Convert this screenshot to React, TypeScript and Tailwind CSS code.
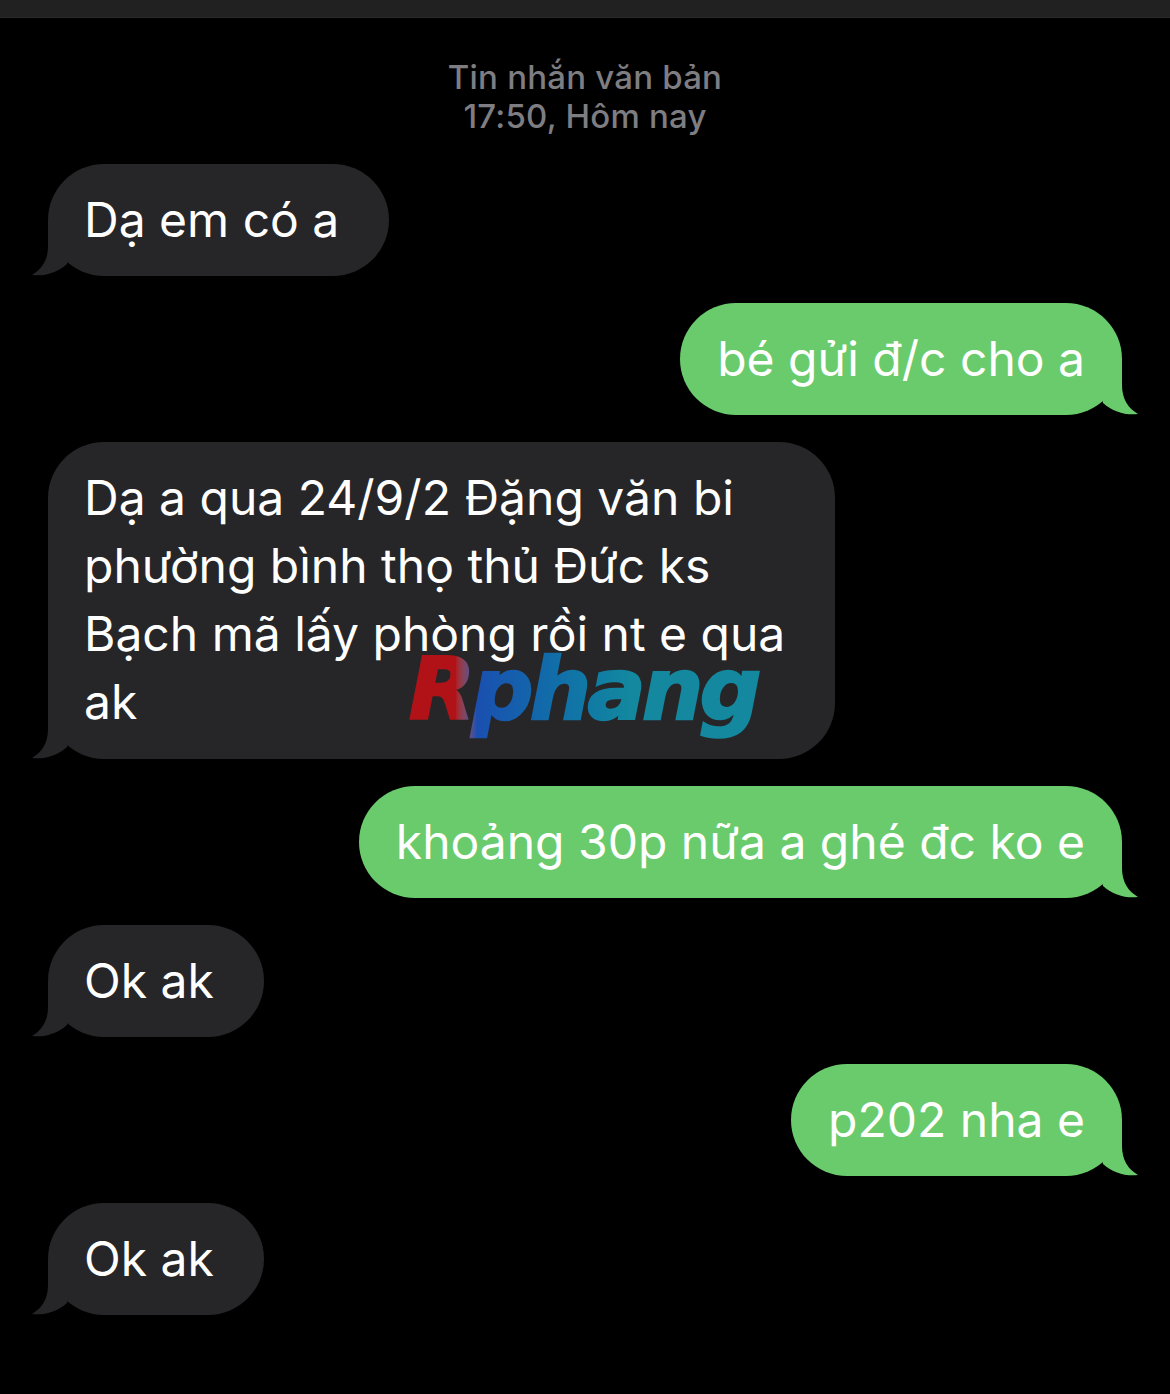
import React from "react";

const font = { fontFamily: "Inter, 'Noto Sans', sans-serif" };

const Tail = ({ side, color }: { side: "left" | "right"; color: string }) => (
  <svg
    width="44"
    height="56"
    viewBox="0 0 44 56"
    className={side === "left" ? "absolute bottom-0 left-[-16px]" : "absolute bottom-0 right-[-16px] -scale-x-100"}
  >
    <path d="M16 0V26C16 40 10 49 0 55C12 56.500 25 53 35 44L44 0Z" fill={color} />
  </svg>
);

const Bubble = ({ mine, children }: { mine?: boolean; children: React.ReactNode }) => (
  <div
    className={
      mine
        ? "relative self-end rounded-[56px] bg-[#69cb6c] py-[22px] pr-[37px] pl-[37px] text-[48px] leading-[68px] text-white whitespace-nowrap"
        : "relative self-start rounded-[56px] bg-[#262628] py-[22px] pr-[50px] pl-[36px] text-[48px] leading-[68px] text-white whitespace-nowrap"
    }
  >
    <Tail side={mine ? "right" : "left"} color={mine ? "#69cb6c" : "#262628"} />
    <div className="relative">{children}</div>
  </div>
);

export default function App() {
  return (
    <div className="h-[1394px] w-[1170px] overflow-hidden bg-black" style={font}>
      <div className="h-[18px] border-b border-[#2a2a2a] bg-[#212121]" />
      <div className="pt-[40px] text-center text-[33px] leading-[39px] font-medium tracking-[0.2px] text-[#7d7d82]">
        <div>Tin nhắn văn bản</div>
        <div>17:50, Hôm nay</div>
      </div>
      <div className="flex flex-col gap-[27px] pt-[28px] pl-[48px] pr-[48px]">
        <Bubble>Dạ em có a</Bubble>
        <Bubble mine>bé gửi đ/c cho a</Bubble>
        <Bubble>
          <div className="pb-px">
            Dạ a qua 24/9/2 Đặng văn bi
            <br />
            phường bình thọ thủ Đức ks
            <br />
            Bạch mã lấy phòng rồi nt e qua
            <br />
            ak
          </div>
          <div className="absolute left-[325px] top-[180px] bg-gradient-to-r from-[#b01217] from-[13%] via-[#1a4fb0] via-[19%] to-[#13889f] to-[62%] bg-clip-text pr-2 pb-3 text-[86px] leading-[90px] font-bold italic tracking-[-3.5px] text-transparent [-webkit-text-stroke:2.5px_transparent] [font-family:'DejaVu_Sans',sans-serif]">
            Rphang
          </div>
        </Bubble>
        <Bubble mine>khoảng 30p nữa a ghé đc ko e</Bubble>
        <Bubble>Ok ak</Bubble>
        <Bubble mine>p202 nha e</Bubble>
        <Bubble>Ok ak</Bubble>
      </div>
    </div>
  );
}
